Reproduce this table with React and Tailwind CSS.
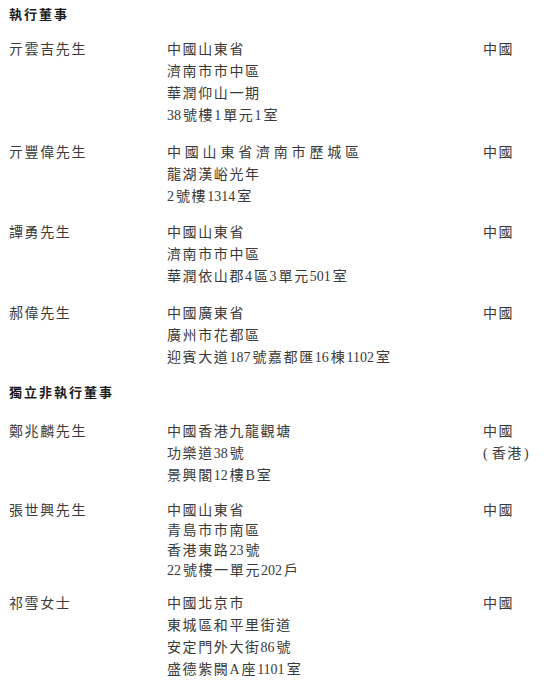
import React from "react";

const executive = [
  {
    name: "亓雲吉先生",
    address: ["中國山東省", "濟南市市中區", "華潤仰山一期", "38號樓1單元1室"],
    nationality: "中國",
    gap: "mb-[15px]",
  },
  {
    name: "亓豐偉先生",
    address: ["中國山東省濟南市歷城區", "龍湖漢峪光年", "2號樓1314室"],
    wide: [0],
    nationality: "中國",
    gap: "mb-[14px]",
  },
  {
    name: "譚勇先生",
    address: ["中國山東省", "濟南市市中區", "華潤依山郡4區3單元501室"],
    nationality: "中國",
    gap: "mb-[15px]",
  },
  {
    name: "郝偉先生",
    address: ["中國廣東省", "廣州市花都區", "迎賓大道187號嘉都匯16棟1102室"],
    nationality: "中國",
    gap: "mb-[12px]",
  },
];

const independent = [
  {
    name: "鄭兆麟先生",
    address: ["中國香港九龍觀塘", "功樂道38號", "景興閣12樓B室"],
    nationality: "中國",
    hk: true,
    gap: "mb-[14px]",
  },
  {
    name: "張世興先生",
    address: ["中國山東省", "青島市市南區", "香港東路23號", "22號樓一單元202戶"],
    nationality: "中國",
    tight: true,
    gap: "mb-[12px]",
  },
  {
    name: "祁雪女士",
    address: ["中國北京市", "東城區和平里街道", "安定門外大街86號", "盛德紫闕A座1101室"],
    nationality: "中國",
    gap: "",
  },
];

// latin / digit runs are set tight, CJK keeps the wide tracking
const Line = ({ text, wide }) => {
  const parts = text.split(/([0-9A-Za-z]+)/).filter(Boolean);
  return (
    <div className={wide ? "tracking-[3.8px] whitespace-nowrap" : "tracking-[1.6px] whitespace-nowrap"}>
      {parts.map((p, i) =>
        /^[0-9A-Za-z]+$/.test(p) ? (
          <span key={i} className="tracking-normal mr-[2px]">
            {p}
          </span>
        ) : (
          <span key={i}>{p}</span>
        )
      )}
    </div>
  );
};

const Row = ({ row }) => (
  <div
    className={`grid grid-cols-[158px_316px_1fr] ${row.tight ? "leading-[20px]" : "leading-[22px]"} ${row.gap}`}
  >
    <div className="tracking-[1.6px] whitespace-nowrap">{row.name}</div>
    <div>
      {row.address.map((a, i) => (
        <Line key={i} text={a} wide={row.wide && row.wide.includes(i)} />
      ))}
    </div>
    <div className="tracking-[1.6px] whitespace-nowrap">
      <div>{row.nationality}</div>
      {row.hk && (
        <div className="flex items-center">
          <span className="tracking-normal mr-[4px]">(</span>
          <span>香港</span>
          <span className="tracking-normal ml-[1px]">)</span>
        </div>
      )}
    </div>
  </div>
);

const Heading = ({ children, gap }) => (
  <div
    className={`font-bold text-[13px] leading-[22px] tracking-[2px] text-[#1c1c1c] font-['Noto_Sans_CJK_TC',sans-serif] ${gap}`}
  >
    {children}
  </div>
);

export default function App() {
  return (
    <div className="w-[550px] h-[690px] overflow-hidden bg-white pt-[3px] pl-[9px] text-[14px] text-[#3a3a3a] font-['Liberation_Serif','Noto_Sans_CJK_TC',serif]">
      <Heading gap="mb-[14px]">執行董事</Heading>
      {executive.map((r) => (
        <Row key={r.name} row={r} />
      ))}
      <Heading gap="mb-[18px]">獨立非執行董事</Heading>
      {independent.map((r) => (
        <Row key={r.name} row={r} />
      ))}
    </div>
  );
}
